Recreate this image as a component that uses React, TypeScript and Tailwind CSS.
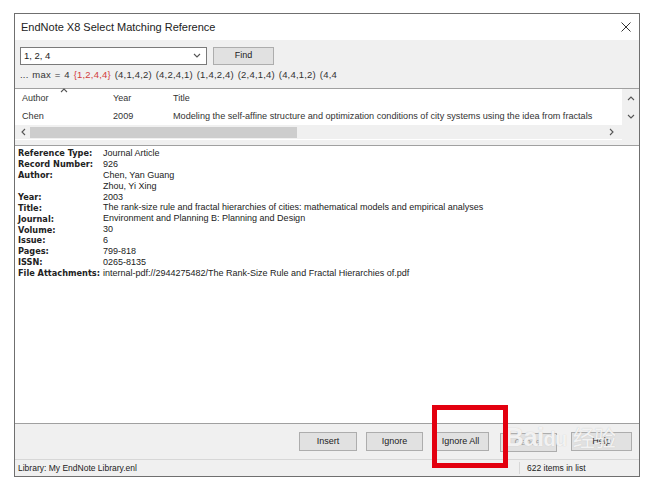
import React from 'react';

const fields: [string, string[]][] = [
  ['Reference Type:', ['Journal Article']],
  ['Record Number:', ['926']],
  ['Author:', ['Chen, Yan Guang', 'Zhou, Yi Xing']],
  ['Year:', ['2003']],
  ['Title:', ['The rank-size rule and fractal hierarchies of cities: mathematical models and empirical analyses']],
  ['Journal:', ['Environment and Planning B: Planning and Design']],
  ['Volume:', ['30']],
  ['Issue:', ['6']],
  ['Pages:', ['799-818']],
  ['ISSN:', ['0265-8135']],
  ['File Attachments:', ['internal-pdf://2944275482/The Rank-Size Rule and Fractal Hierarchies of.pdf']],
];

const Chevron: React.FC<{ dir: 'up' | 'down' | 'left' | 'right' }> = ({ dir }) => {
  const d = {
    up: 'M1 5 L4 2 L7 5',
    down: 'M1 2 L4 5 L7 2',
    left: 'M5 1 L2 4 L5 7',
    right: 'M2 1 L5 4 L2 7',
  }[dir];
  return (
    <svg width="8" height="8" viewBox="0 0 8 8">
      <path d={d} fill="none" stroke="#555" strokeWidth="1.1" />
    </svg>
  );
};

const Btn: React.FC<{ label: string; cls: string }> = ({ label, cls }) => (
  <div className={`${cls} h-[19px] flex items-center justify-center bg-[#e1e1e1] border border-[#adadad] text-[9px] text-[#222]`}>
    {label}
  </div>
);

export default function App() {
  return (
    <div className="w-[661px] h-[485px] bg-white pt-[13px] pl-[14px] relative" style={{ fontFamily: '"Liberation Sans", Arial, sans-serif' }}>
      <div className="w-[626px] h-[464px] border border-[#6f6f6f] flex flex-col bg-[#f0f0f0]">
        {/* Title bar */}
        <div className="h-[26px] bg-white flex items-center justify-between pl-[6px] pr-[8px]">
          <span className="text-[11px] text-[#222]">EndNote X8 Select Matching Reference</span>
          <svg width="10" height="10" viewBox="0 0 10 10">
            <path d="M0.5 0.5 L9.5 9.5 M9.5 0.5 L0.5 9.5" stroke="#333" strokeWidth="1" />
          </svg>
        </div>

        {/* Search area */}
        <div className="h-[48px] px-[5px] pt-[7px] flex flex-col">
          <div className="flex items-center gap-[6px]">
            <div className="w-[187px] h-[18px] bg-white border border-[#7a7a7a] flex items-center justify-between pl-[3px] pr-[5px]">
              <span className="text-[9.5px] text-[#222]">1, 2, 4</span>
              <Chevron dir="down" />
            </div>
            <div className="w-[61px] h-[18px] bg-[#e1e1e1] border border-[#adadad] flex items-center justify-center text-[9px] text-[#222]">
              Find
            </div>
          </div>
          <div className="mt-[3px] text-[9.5px] tracking-[0.2px] [word-spacing:1px] text-[#333] whitespace-nowrap">
            ... max = 4 <span className="text-[#d23c3c]">{'{1,2,4,4}'}</span> (4,1,4,2) (4,2,4,1) (1,4,2,4) (2,4,1,4) (4,4,1,2) (4,4
          </div>
        </div>

        {/* Results table */}
        <div className="h-[52px] bg-white border-t border-[#a0a0a0] flex">
          <div className="flex-1 flex flex-col">
            <div className="h-[19px] flex items-center text-[9px] text-[#333] relative">
              <span className="w-[98px] pl-[7px]">Author</span>
              <span className="w-[60px]">Year</span>
              <span>Title</span>
              <span className="absolute left-[45px] top-[-2px]"><Chevron dir="up" /></span>
            </div>
            <div className="h-[17px] flex items-center text-[9.15px] text-[#333] whitespace-nowrap">
              <span className="w-[98px] pl-[7px]">Chen</span>
              <span className="w-[60px]">2009</span>
              <span>Modeling the self-affine structure and optimization conditions of city systems using the idea from fractals</span>
            </div>
            <div className="h-[14px] bg-[#f0f0f0] flex items-center pl-[5px] pr-[6px]">
              <Chevron dir="left" />
              <div className="ml-[2px] w-[267px] h-[11px] bg-[#cdcdcd]" />
              <div className="flex-1" />
              <Chevron dir="right" />
            </div>
          </div>
          <div className="w-[17px] bg-[#f0f0f0] flex flex-col items-center pt-[6px] gap-[10px]">
            <Chevron dir="up" />
            <Chevron dir="down" />
          </div>
        </div>

        {/* Details panel */}
        <div className="mt-[5px] h-[279px] bg-white border-t border-b border-[#a0a0a0] pt-[2px] pl-[3px]">
          {fields.map(([label, vals]) =>
            vals.map((v, i) => (
              <div key={label + i} className="h-[10.9px] flex items-center text-[9px] text-[#222] whitespace-nowrap leading-none">
                <span className="w-[85px] font-bold text-[8.2px]" style={{ fontFamily: '"DejaVu Sans", Verdana, sans-serif' }}>
                  {i === 0 ? label : ''}
                </span>
                <span>{v}</span>
              </div>
            ))
          )}
        </div>

        {/* Buttons */}
        <div className="h-[35px] flex items-center justify-end pr-[7px]">
          <Btn label="Insert" cls="w-[58px]" />
          <Btn label="Ignore" cls="w-[57px] ml-[9px]" />
          <Btn label="Ignore All" cls="w-[57px] ml-[9px]" />
          <div className="w-[57px] ml-[10px]" />
          <Btn label="Help" cls="w-[61px] ml-[15px]" />
        </div>

        {/* Status bar */}
        <div className="flex-1 border-t border-[#d7d7d7] flex items-center text-[8.5px] text-[#222]">
          <span className="pl-[3px] flex-1">Library: My EndNote Library.enl</span>
          <span className="w-[120px] pl-[7px] border-l border-[#d7d7d7]">622 items in list</span>
        </div>
      </div>

      {/* Cancel button under watermark */}
      <div className="absolute left-[500px] top-[433px] w-[57px] h-[19px] bg-[#e1e1e1] border border-[#adadad] flex items-center justify-center text-[9px] text-[#999]">
        Cancel
      </div>

      {/* Baidu watermark */}
      <div className="absolute left-[505px] top-[418px] text-[26px] font-bold text-white/80 tracking-tight" style={{ fontFamily: '"Liberation Sans", "Noto Sans CJK SC", sans-serif', textShadow: '0 0 1px #bbb' }}>
        Bai<span className="text-[20px]">du</span><span className="ml-[6px] text-[22px] font-normal">经验</span>
      </div>

      {/* Red highlight box */}
      <div className="absolute left-[432px] top-[405px] w-[76px] h-[63px] border-[5px] border-[#e3000f]" />
    </div>
  );
}
